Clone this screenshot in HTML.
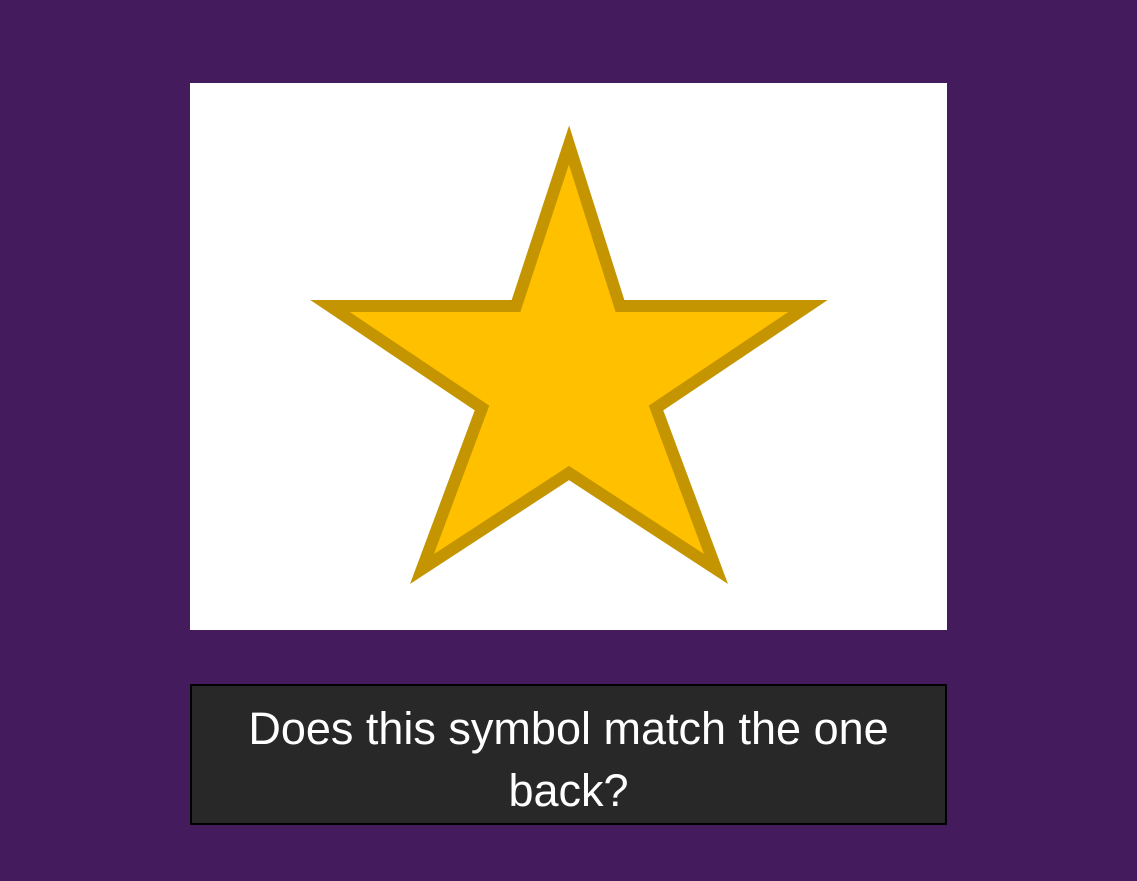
<!DOCTYPE html>
<html><head><style>
html,body{margin:0;padding:0;}
body{width:1137px;height:881px;background:#441c5e;position:relative;overflow:hidden;}
.card{position:absolute;left:190px;top:83px;width:757px;height:547px;background:#fff;}
.box{position:absolute;left:190px;top:684px;width:753px;height:137px;background:#282828;border:2px solid #000;}
.t{position:absolute;left:0;width:753px;text-align:center;color:#fff;font-family:"Liberation Sans",sans-serif;font-size:45px;letter-spacing:0;line-height:62px;top:12px;}
</style></head><body>
<div class="card"></div>
<svg style="position:absolute;left:0;top:0" width="1137" height="881">
<polygon points="569,145 620,306 808,306 656,408 716,569 569,473 422,569 482,408 330,306 516,306" fill="#ffc000" stroke="#c49500" stroke-width="12" stroke-linejoin="miter" stroke-miterlimit="10"/>
</svg>
<div class="box"><div class="t">Does this symbol match the one<br>back?</div></div>
</body></html>
